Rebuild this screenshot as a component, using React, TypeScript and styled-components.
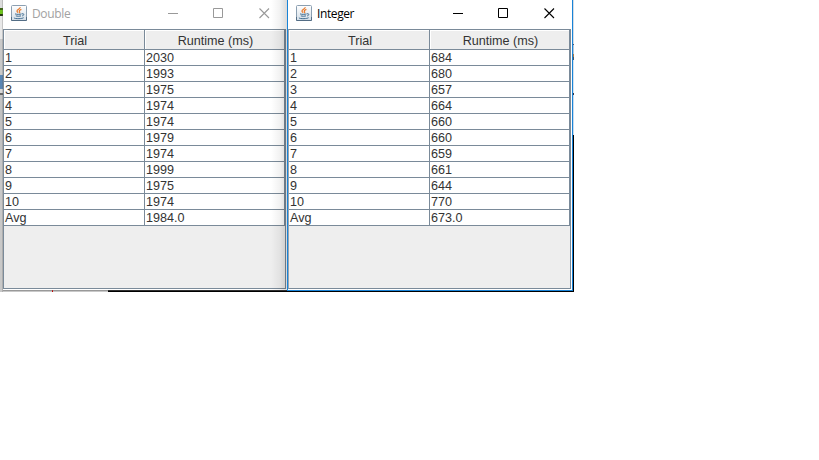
import React from 'react';
import styled, { createGlobalStyle } from 'styled-components';

const Global = createGlobalStyle`
  * { box-sizing: border-box; }
  body { margin: 0; background: #fff; overflow: hidden; }
`;

const line = '#7a8a99';

const Desktop = styled.main`
  display: flex;
  align-items: flex-start;
  width: 819px;
  height: 460px;
  background: #fff;
`;

const LeftEdge = styled.div`
  flex: none;
  width: 3px;
  height: 292px;
  background: linear-gradient(
    #dcdcdc 0 8px, #3c6414 8px 10px, #6fc61c 10px 14px, #26380f 14px 16px,
    #e8e8e8 16px 39px, #c9c9c9 39px 75px, #5a86b4 75px 89px, #d8d8d8 89px 93px,
    #666 93px 95px, #c2c2c2 95px 150px, #c8c8c8 150px 292px
  );
  box-shadow: inset -1px 0 rgba(90, 90, 90, 0.25);
`;

const RightEdge = styled.div`
  flex: none;
  width: 1px;
  height: 292px;
  background: linear-gradient(
    #d5dde5 0 44px, #556 44px 45px, #b6c7d8 45px 54px, #a77a49 54px 57px,
    #456 57px 60px, #d5e2ee 60px 93px, #334 93px 95px, #c9dbed 95px 135px, #000 135px 292px
  );
`;

const Frame = styled.section<{ $active?: boolean }>`
  position: relative;
  flex: none;
  display: flex;
  flex-direction: column;
  width: ${p => (p.$active ? 286 : 284)}px;
  height: ${p => (p.$active ? 291 : 290)}px;
  background: #fff;
  border: solid #1883d7;
  border-width: ${p => (p.$active ? '0 1px 1px 1px' : '0')};
`;

const WindowColumn = styled.div`
  display: flex;
  flex-direction: column;
  flex: none;
`;

const BottomEdge = styled.div<{ $active?: boolean }>`
  height: ${p => (p.$active ? 1 : 2)}px;
  background: ${p =>
    p.$active
      ? '#000'
      : `linear-gradient(90deg, #c8c8c8 0 49px, #c00000 49px 50px, #c8c8c8 50px 105px, #000 105px) 0 1px / 100% 1px no-repeat,
         linear-gradient(90deg, #999 0 49px, #b03030 49px 50px, #999 50px 105px, #303030 105px)`};
`;

const Shade = styled.div`
  position: absolute;
  inset: 0 0 0 auto;
  width: 16px;
  background: linear-gradient(90deg, rgba(0, 0, 0, 0), rgba(0, 0, 0, 0.05) 55%, rgba(0, 0, 0, 0.15));
`;

const TitleBar = styled.header<{ $active?: boolean }>`
  display: flex;
  align-items: center;
  flex: none;
  height: 29px;
  padding: 0 0 3px 8px;
  color: ${p => (p.$active ? '#000' : '#999')};
`;

const Title = styled.h1<{ $active?: boolean }>`
  flex: 1;
  margin: 2px 0 0 5px;
  font: 400 12px/16px "Open Sans", "Noto Sans", sans-serif;
  letter-spacing: ${p => (p.$active ? '-0.4px' : '-0.35px')};
  color: ${p => (p.$active ? '#000' : '#a2a2a2')};
`;

const Controls = styled.div`
  display: flex;
  gap: 34px;
  margin: 1px 18px 0 0;
  svg { display: block; }
  svg:last-child { margin: 0 -1px 0 1px; }
`;

const Pane = styled.div<{ $active?: boolean }>`
  display: flex;
  flex-direction: column;
  height: 260px;
  margin-right: 1px;
  background: #eee;
  border: 1px solid ${line};
  ${p => (p.$active ? 'border-left-color: #98a5b1;' : '')}
`;

const Grid = styled.table`
  width: 100%;
  border-collapse: separate;
  border-spacing: 0;
  table-layout: fixed;
  font: 12.6px/14px "Liberation Sans", Arial, sans-serif;
  color: #333;
`;

const Column = styled.col<{ $w?: number }>`
  width: ${p => (p.$w ? `${p.$w}px` : 'auto')};
`;

const Head = styled.th`
  height: 20px;
  padding: 3px 0 0 2px;
  font-weight: 400;
  line-height: 16px;
  text-align: center;
  background: #eee;
  border-right: 1px solid ${line};
  border-bottom: 1px solid ${line};
  box-shadow: inset 1px 1px #fff;
`;

const Cell = styled.td`
  height: 16px;
  padding: 1px 0 0 1px;
  background: #fff;
  border-right: 1px solid ${line};
  border-bottom: 1px solid ${line};
`;

function JavaIcon() {
  return (
    <svg width="16" height="16" viewBox="0 0 16 16" fill="none">
      <defs>
        <linearGradient id="tile" x2="0" y2="1">
          <stop stopColor="#fff" />
          <stop offset="1" stopColor="#d3dee7" />
        </linearGradient>
      </defs>
      <rect x=".5" y=".5" width="15" height="15" rx="1" fill="url(#tile)" stroke="#8b9fb1" />
      <path d="M.5 12v3.5h15V12" stroke="#536d85" />
      <path d="M9.2 2.2C9.5 4 5.5 4.6 6 6.2c.2.6.8 1 1.1 1.6M10.4 4.4c-2 .7-2.7 1.5-1.8 2.4.4.5 0 1-.5 1.3" stroke="#e8792a" strokeWidth="1.2" />
      <path d="M4 8.9c1.6.6 4.8.6 6.6 0M4.8 10.9c1.5.5 3.7.5 5.2 0M11 8.8c2.6-.5 2.2 1.7.2 2.1M3 12.6c-.4 1.4 8 1.4 9.6.1" stroke="#416d91" />
    </svg>
  );
}

function WindowControls() {
  return (
    <Controls>
      <svg width="11" height="11" stroke="currentColor"><path d="M0 5.5h10" /></svg>
      <svg width="11" height="11" stroke="currentColor" fill="none"><path d="M.5.5h9v9h-9z" /></svg>
      <svg width="11" height="11" stroke="currentColor" strokeWidth="1.1"><path d="M.5.5l9.5 9.5M10 .5L.5 10" /></svg>
    </Controls>
  );
}

type ResultProps = { title: string; values: string[]; active?: boolean };

function ResultWindow({ title, values, active }: ResultProps) {
  return (
    <WindowColumn>
      <Frame $active={active}>
        <TitleBar $active={active}>
          <JavaIcon />
          <Title $active={active}>{title}</Title>
          <WindowControls />
        </TitleBar>
        <Pane $active={active}>
          <Grid>
            <colgroup>
              <Column $w={141} />
              <Column />
            </colgroup>
            <thead>
              <tr><Head>Trial</Head><Head>Runtime (ms)</Head></tr>
            </thead>
            <tbody>
              {values.map((value, i) => (
                <tr key={i}>
                  <Cell>{i < 10 ? i + 1 : 'Avg'}</Cell>
                  <Cell>{value}</Cell>
                </tr>
              ))}
            </tbody>
          </Grid>
        </Pane>
        {!active && <Shade />}
      </Frame>
      <BottomEdge $active={active} />
    </WindowColumn>
  );
}

const doubles = ['2030', '1993', '1975', '1974', '1974', '1979', '1974', '1999', '1975', '1974', '1984.0'];
const integers = ['684', '680', '657', '664', '660', '660', '659', '661', '644', '770', '673.0'];

export default function App() {
  return (
    <Desktop>
      <Global />
      <LeftEdge />
      <ResultWindow title="Double" values={doubles} />
      <ResultWindow title="Integer" values={integers} active />
      <RightEdge />
    </Desktop>
  );
}
